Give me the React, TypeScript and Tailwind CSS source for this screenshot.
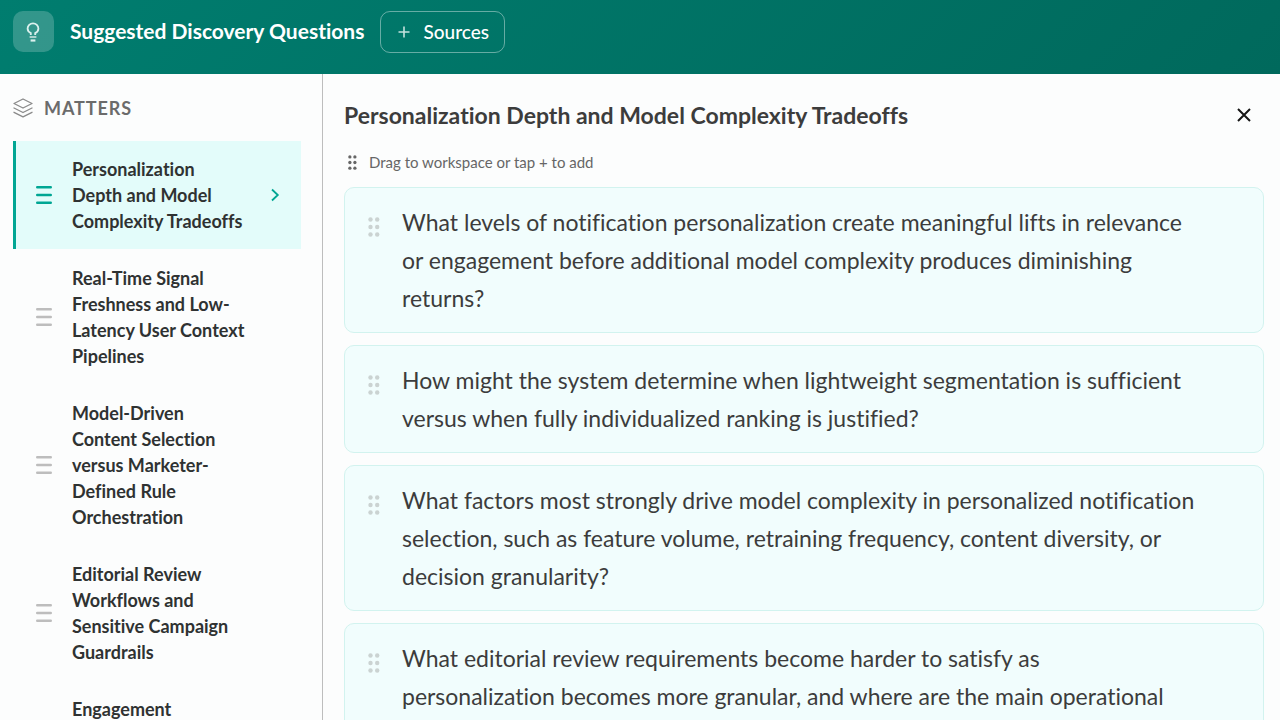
import { useState } from "react";

const matters = [
  "Personalization Depth and Model Complexity Tradeoffs",
  "Real-Time Signal Freshness and Low-Latency User Context Pipelines",
  "Model-Driven Content Selection versus Marketer-Defined Rule Orchestration",
  "Editorial Review Workflows and Sensitive Campaign Guardrails",
  "Engagement",
];

const questions = [
  "What levels of notification personalization create meaningful lifts in relevance or engagement before additional model complexity produces diminishing returns?",
  "How might the system determine when lightweight segmentation is sufficient versus when fully individualized ranking is justified?",
  "What factors most strongly drive model complexity in personalized notification selection, such as feature volume, retraining frequency, content diversity, or decision granularity?",
  "What editorial review requirements become harder to satisfy as personalization becomes more granular, and where are the main operational",
];

function BulbIcon() {
  return (
    <svg width="15" height="20" viewBox="0 0 15 20" fill="none" aria-hidden="true">
      <path
        d="M4.8 13V11.1C2.8 10.1 1.6 8.6 1.6 6.5A5.4 5.2 0 0 1 12.4 6.5C12.4 8.6 11.2 10.1 9.2 11.1V13"
        stroke="#dcf1ee"
        strokeWidth="1.8"
      />
      <path d="M3.6 15H10.4" stroke="#a9d3cd" strokeWidth="2" />
      <path d="M4.6 18.5H9.4" stroke="#dcf1ee" strokeWidth="2.2" />
    </svg>
  );
}

function LayersIcon() {
  return (
    <svg
      width="20"
      height="20"
      viewBox="0 0 20 20"
      fill="none"
      stroke="#8a8a8a"
      strokeWidth="1.3"
      strokeLinejoin="round"
      strokeLinecap="round"
      aria-hidden="true"
    >
      <path d="M10 1L19 5.5L10 10L1 5.5Z" />
      <path d="M1 10L10 14.5L19 10" />
      <path d="M1 14.3L10 18.8L19 14.3" />
    </svg>
  );
}

function BarsIcon() {
  return (
    <svg width="16" height="20" viewBox="0 0 16 20" stroke="currentColor" strokeWidth="2.4" strokeLinecap="round" aria-hidden="true" className="shrink-0">
      <path d="M1.2 2.2H14.8M1.2 10H14.8M1.2 17.8H14.8" />
    </svg>
  );
}

function Dots({ className }: { className: string }) {
  return (
    <svg viewBox="0 0 12 20" fill="currentColor" className={className} aria-hidden="true">
      {[2.5, 10, 17.5].map((y) => (
        <g key={y}>
          <circle cx="2.5" cy={y} r="2.2" />
          <circle cx="9.2" cy={y} r="2.2" />
        </g>
      ))}
    </svg>
  );
}

export default function App() {
  const [active, setActive] = useState(0);

  return (
    <div className="flex h-screen flex-col overflow-hidden bg-[#fcfdfd] font-['Lato','Open_Sans',sans-serif] text-[#3c3c3c] [font-variant-ligatures:none]">
      <header className="flex h-[74px] shrink-0 items-start bg-linear-135 from-[#007d6f] to-[#00695c] px-[13px] pt-[11px] text-white">
        <div className="flex size-[41px] items-center justify-center rounded-[10px] bg-white/20">
          <BulbIcon />
        </div>
        <h1 className="ml-4 text-[21px] leading-10 font-bold">Suggested Discovery Questions</h1>
        <button
          type="button"
          className="ml-4 flex h-[42px] items-center gap-3 rounded-[10px] border border-white/40 pr-[15px] pl-4 text-[19px] font-medium"
        >
          <svg width="14" height="14" viewBox="0 0 14 14" stroke="#c4e2de" strokeWidth="1.6" aria-hidden="true">
            <path d="M7 1.5V12.5M1.5 7H12.5" />
          </svg>
          Sources
        </button>
      </header>

      <div className="flex min-h-0 flex-1">
        <aside className="w-[323px] shrink-0 overflow-hidden border-r border-[#bdbdbd] pt-5 pr-[21px] pl-[13px]">
          <h2 className="flex items-center gap-[11px] text-lg leading-7 font-bold tracking-wider text-[#6b6b6b]">
            <LayersIcon />
            MATTERS
          </h2>
          <nav className="mt-[19px] flex flex-col gap-px">
            {matters.map((matter, i) => (
              <button
                key={matter}
                type="button"
                onClick={() => setActive(i)}
                className={
                  i === active
                    ? "flex min-h-[108px] w-full items-center border-l-3 border-[#00a693] bg-[#e3fcfa] py-[15px] pr-[21px] pl-5 text-left text-[#00a693]"
                    : "flex min-h-[108px] w-full items-center border-l-3 border-transparent py-[15px] pr-[21px] pl-5 text-left text-[#bdbdbd]"
                }
              >
                <BarsIcon />
                <span className="ml-5 w-[176px] self-start text-lg leading-[26px] font-bold text-[#2f3232]">
                  {matter}
                </span>
                {i === active && (
                  <svg
                    width="10"
                    height="14"
                    viewBox="0 0 10 14"
                    fill="none"
                    stroke="currentColor"
                    strokeWidth="1.8"
                    className="ml-auto shrink-0"
                    aria-hidden="true"
                  >
                    <path d="M2 1.5L7.8 7L2 12.5" />
                  </svg>
                )}
              </button>
            ))}
          </nav>
        </aside>

        <main className="min-w-0 flex-1 overflow-hidden pt-[23px] pr-4 pl-[21px]">
          <div className="flex items-center justify-between pr-[11px]">
            <h2 className="text-[23px] leading-9 font-bold">Personalization Depth and Model Complexity Tradeoffs</h2>
            <button type="button" aria-label="Close" className="p-px">
              <svg width="16" height="16" viewBox="0 0 16 16" stroke="#161616" strokeWidth="2" aria-hidden="true">
                <path d="M2 2L14 14M14 2L2 14" />
              </svg>
            </button>
          </div>
          <p className="mt-[17px] flex items-center gap-3 pl-1 text-[15px] leading-6 text-[#666]">
            <Dots className="h-[15px] w-[9px]" />
            Drag to workspace or tap + to add
          </p>
          <ul className="mt-[13px] flex flex-col gap-3">
            {questions.map((question) => (
              <li
                key={question}
                className="flex items-start rounded-[10px] border border-[#d2f3ef] bg-[#f1fdfd] py-[15px] pr-[67px] pl-[23px] text-[23px] leading-[38px]"
              >
                <Dots className="mt-[14px] h-5 w-3 shrink-0 text-[#cbd3d2]" />
                <span className="ml-[22px]">{question}</span>
              </li>
            ))}
          </ul>
        </main>
      </div>
    </div>
  );
}
